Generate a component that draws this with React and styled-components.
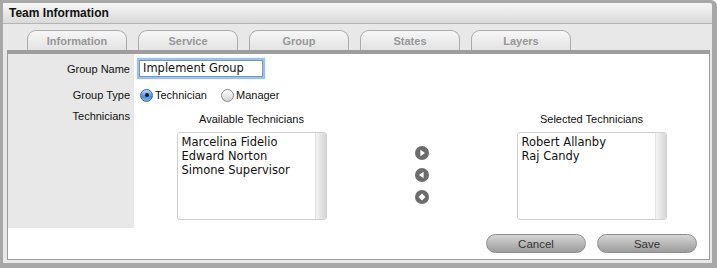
import React from 'react'
import styled, { createGlobalStyle } from 'styled-components'

const GlobalStyle = createGlobalStyle`
  * { box-sizing: border-box; }
  body {
    margin: 0;
    background: #fff;
    font-family: "Liberation Sans", Arial, sans-serif;
  }
`

const Window = styled.div`
  width: 717px;
  height: 268px;
  display: flex;
  flex-direction: column;
  border-style: solid;
  border-color: #a7a7a7;
  border-width: 3px 5px 5px 3px;
  border-top-right-radius: 6px;
  background: #e8e8e8;
`

const TitleBar = styled.div`
  height: 21px;
  padding-left: 6px;
  line-height: 20px;
  font-size: 12px;
  font-weight: bold;
  color: #111;
  background: linear-gradient(#f6f6f6, #dadada);
  border-bottom: 1px solid #b4b4b4;
  border-top-right-radius: 4px;
`

const Body = styled.div`
  flex: 1;
  display: flex;
  flex-direction: column;
  padding: 6px 2px 3px 4px;
`

const TabRow = styled.div`
  display: flex;
  gap: 11px;
  height: 20px;
  padding-left: 20px;
`

const Tab = styled.div`
  width: 100px;
  height: 20px;
  border: 1px solid #ababab;
  border-bottom: none;
  border-radius: 9px 9px 0 0;
  background: linear-gradient(#f7f7f7, #e3e3e3);
  color: #979797;
  font-size: 11px;
  font-weight: bold;
  text-align: center;
  line-height: 20px;
`

const Panel = styled.div`
  flex: 1;
  display: flex;
  flex-direction: column;
  background: #fff;
  border: 1px solid #9b9b9b;
  border-top: 4px solid #9d9d9d;
`

const Row = styled.div`
  display: grid;
  grid-template-columns: 126px 1fr;
  height: ${(p) => p.$height}px;
`

const Label = styled.div`
  background: #e8e8e8;
  text-align: right;
  padding-right: 4px;
  padding-top: ${(p) => p.$top}px;
  line-height: 14px;
  font-size: 11px;
  color: #111;
`

const Field = styled.div`
  padding-top: ${(p) => p.$top}px;
  padding-left: ${(p) => p.$left || 0}px;
`

const TextInput = styled.input`
  width: 124px;
  height: 17px;
  margin-left: 5px;
  padding: 0 0 0 3px;
  border: 1px solid #6f98cb;
  box-shadow: 0 0 1px 2px #9fc0e8;
  font-family: "DejaVu Sans", Verdana, sans-serif;
  font-size: 11.5px;
  color: #111;
  outline: none;
`

const RadioGroup = styled.div`
  display: flex;
  align-items: center;
  height: 14px;
`

const RadioOption = styled.label`
  display: flex;
  align-items: center;
  gap: 2px;
  margin-right: 14px;
  font-size: 11px;
  color: #111;
`

const RadioDot = styled.span`
  width: 13px;
  height: 13px;
  border-radius: 50%;
  display: flex;
  align-items: center;
  justify-content: center;
  border: 1px solid ${(p) => (p.$checked ? '#3a6cab' : '#8a8a8a')};
  background: ${(p) =>
    p.$checked
      ? 'linear-gradient(#bcd7f5, #4f8ed9 60%, #7fb2ec)'
      : 'linear-gradient(#fdfdfd, #d4d4d4)'};

  &::after {
    content: '';
    display: ${(p) => (p.$checked ? 'block' : 'none')};
    width: 4px;
    height: 4px;
    border-radius: 50%;
    background: #1b1b1b;
  }
`

const Transfer = styled.div`
  display: flex;
  justify-content: center;
  align-items: flex-start;
  gap: 88px;
`

const ListColumn = styled.div`
  width: 150px;
  display: flex;
  flex-direction: column;
  align-items: center;
`

const ListHeading = styled.div`
  line-height: 14px;
  font-size: 11px;
  color: #111;
  margin-bottom: 6px;
`

const ListBox = styled.div`
  width: 150px;
  height: 88px;
  display: flex;
  border: 1px solid #cfcfcf;
  border-radius: 3px;
  overflow: hidden;
`

const ListItems = styled.div`
  flex: 1;
  padding: 2px 4px;
  font-family: "DejaVu Sans", Verdana, sans-serif;
  font-size: 11.5px;
  line-height: 14px;
  color: #111;
`

const ScrollTrack = styled.div`
  width: 11px;
  background: linear-gradient(to right, #f4f4f4, #d6d6d6);
  border-left: 1px solid #e2e2e2;
`

const ArrowColumn = styled.div`
  display: flex;
  flex-direction: column;
  gap: 8px;
  margin-top: 34px;
`

const ButtonBar = styled.div`
  flex: 1;
  display: flex;
  justify-content: flex-end;
  gap: 11px;
  padding: 6px 12px 0 0;
`

const Button = styled.button`
  width: 100px;
  height: 19px;
  border: 1px solid #8d8d8d;
  border-radius: 10px;
  background: linear-gradient(#d6d6d6, #b9b9b9 50%, #9c9c9c);
  font-family: "Liberation Sans", Arial, sans-serif;
  font-size: 11.5px;
  color: #333;
  padding: 0;
`

const ArrowIcon = ({ kind }) => (
  <svg width="14" height="14" viewBox="0 0 14 14">
    <circle cx="7" cy="7" r="7" fill="#6c6c6c" />
    {kind === 'right' && <path d="M5.4 3.8 L10 7 L5.4 10.2 Z" fill="#fff" />}
    {kind === 'left' && <path d="M8.6 3.8 L4 7 L8.6 10.2 Z" fill="#fff" />}
    {kind === 'both' && <path d="M7 3.6 L10.4 7 L7 10.4 L3.6 7 Z" fill="#fff" />}
  </svg>
)

const tabs = ['Information', 'Service', 'Group', 'States', 'Layers']
const available = ['Marcelina Fidelio', 'Edward Norton', 'Simone Supervisor']
const selected = ['Robert Allanby', 'Raj Candy']

const App = () => {
  return (
    <>
      <GlobalStyle />
      <Window>
        <TitleBar>Team Information</TitleBar>
        <Body>
          <TabRow>
            {tabs.map((t) => (
              <Tab key={t}>{t}</Tab>
            ))}
          </TabRow>
          <Panel>
            <Row $height={30}>
              <Label $top={8}>Group Name</Label>
              <Field $top={4}>
                <TextInput defaultValue="Implement Group" />
              </Field>
            </Row>
            <Row $height={22}>
              <Label $top={4}>Group Type</Label>
              <Field $top={4} $left={6}>
                <RadioGroup>
                  <RadioOption>
                    <RadioDot $checked />
                    Technician
                  </RadioOption>
                  <RadioOption>
                    <RadioDot />
                    Manager
                  </RadioOption>
                </RadioGroup>
              </Field>
            </Row>
            <Row $height={122}>
              <Label $top={3}>Technicians</Label>
              <Field $top={6}>
                <Transfer>
                  <ListColumn>
                    <ListHeading>Available Technicians</ListHeading>
                    <ListBox>
                      <ListItems>
                        {available.map((n) => (
                          <div key={n}>{n}</div>
                        ))}
                      </ListItems>
                      <ScrollTrack />
                    </ListBox>
                  </ListColumn>
                  <ArrowColumn>
                    <ArrowIcon kind="right" />
                    <ArrowIcon kind="left" />
                    <ArrowIcon kind="both" />
                  </ArrowColumn>
                  <ListColumn>
                    <ListHeading>Selected Technicians</ListHeading>
                    <ListBox>
                      <ListItems>
                        {selected.map((n) => (
                          <div key={n}>{n}</div>
                        ))}
                      </ListItems>
                      <ScrollTrack />
                    </ListBox>
                  </ListColumn>
                </Transfer>
              </Field>
            </Row>
            <ButtonBar>
              <Button>Cancel</Button>
              <Button>Save</Button>
            </ButtonBar>
          </Panel>
        </Body>
      </Window>
    </>
  )
}

export default App
